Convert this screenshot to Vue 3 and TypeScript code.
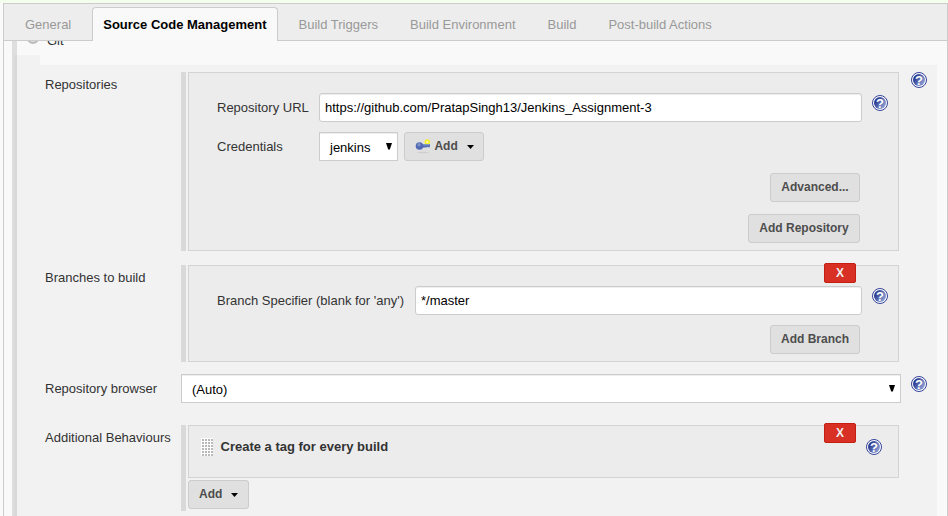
<script setup lang="ts">
import { defineComponent, h, ref } from 'vue'

const tabs: string[] = [
  'General',
  'Source Code Management',
  'Build Triggers',
  'Build Environment',
  'Build',
  'Post-build Actions',
]
const activeTab = ref('Source Code Management')
const repositoryUrl = ref('https://github.com/PratapSingh13/Jenkins_Assignment-3')
const branch = ref('*/master')

const HelpIcon = defineComponent({
  setup: () => () =>
    h('svg', { width: 16, height: 16, viewBox: '0 0 16 16' }, [
      h('defs', [
        h('linearGradient', { id: 'helpFill', x1: 0, y1: 0, x2: 1, y2: 0.6 }, [
          h('stop', { offset: '0.15', 'stop-color': '#1f2f88' }),
          h('stop', { offset: '1', 'stop-color': '#8ba0d4' }),
        ]),
      ]),
      h('circle', { cx: 8, cy: 8, r: 7.5, fill: '#fff', stroke: '#35429a', 'stroke-width': 1 }),
      h('circle', { cx: 8, cy: 8, r: 6, fill: 'url(#helpFill)' }),
      h('text', {
        x: 8, y: 12.6, 'text-anchor': 'middle', fill: '#fff',
        'font-family': 'Liberation Sans, sans-serif', 'font-weight': 700, 'font-size': 13,
      }, '?'),
    ]),
})
</script>

<template>
  <div class="page">
    <div class="config">
      <nav class="tabs">
        <a v-for="tab in tabs" :key="tab" class="tab" :class="{ active: tab === activeTab }" @click="activeTab = tab">{{ tab }}</a>
      </nav>
      <div class="scroller">
        <div class="scm">
          <div class="git-row"><span class="radio"></span><span class="git">Git</span></div>
          <div class="nested">
            <div class="cutout"></div>

            <section class="row repositories">
              <label class="name">Repositories</label>
              <div class="group">
                <div class="panel">
                  <div class="field url">
                    <label>Repository URL</label>
                    <input v-model="repositoryUrl" type="text" />
                    <HelpIcon class="help" />
                  </div>
                  <div class="field credentials">
                    <label>Credentials</label>
                    <div class="select small">
                      <span>jenkins</span>
                      <svg width="6" height="7" viewBox="0 0 6 7"><path d="M0 0H6L3.8 6.5H2.2Z" /></svg>
                    </div>
                    <button class="btn key-btn">
                      <svg class="key" width="16" height="16" viewBox="0 0 16 16">
                        <ellipse cx="8" cy="13.5" rx="6" ry="0.8" fill="#cfcfcf" />
                        <circle cx="12.3" cy="3" r="2.8" fill="#f5ef2a" />
                        <circle cx="12.3" cy="3" r="1.1" fill="#fffbd0" />
                        <path d="M7 5.3H15V7.6L14 8.7L12.7 7.7L11.5 8.5H7Z" fill="#536fb5" />
                        <path d="M7 5.8H14.5" stroke="#8c9dcc" />
                        <circle cx="4.5" cy="7" r="3.8" fill="#526ab3" />
                        <circle cx="4" cy="5.8" r="1.7" fill="#7f92cb" />
                      </svg>
                      <span>Add</span>
                      <svg class="caret" width="7" height="4" viewBox="0 0 7 4"><path d="M0 0H7L3.5 4Z" /></svg>
                    </button>
                  </div>
                  <div class="actions first"><button class="btn">Advanced...</button></div>
                  <div class="actions"><button class="btn">Add Repository</button></div>
                </div>
              </div>
              <HelpIcon class="help row-help" />
            </section>

            <section class="row branches">
              <label class="name">Branches to build</label>
              <div class="group">
                <div class="panel">
                  <button class="delete">X</button>
                  <div class="field branch">
                    <label>Branch Specifier (blank for 'any')</label>
                    <input v-model="branch" type="text" />
                    <HelpIcon class="help" />
                  </div>
                  <div class="actions branch-actions"><button class="btn">Add Branch</button></div>
                </div>
              </div>
            </section>

            <section class="row browser">
              <label class="name">Repository browser</label>
              <div class="select wide">
                <span>(Auto)</span>
                <svg width="6" height="7" viewBox="0 0 6 7"><path d="M0 0H6L3.8 6.5H2.2Z" /></svg>
              </div>
              <HelpIcon class="help row-help" />
            </section>

            <section class="row behaviours">
              <label class="name">Additional Behaviours</label>
              <div class="group">
                <div class="panel">
                  <button class="delete">X</button>
                  <div class="behaviour">
                    <span class="grip"></span>
                    <b>Create a tag for every build</b>
                    <HelpIcon class="help" />
                  </div>
                </div>
                <button class="btn add">
                  <span>Add</span>
                  <svg class="caret" width="7" height="4" viewBox="0 0 7 4"><path d="M0 0H7L3.5 4Z" /></svg>
                </button>
              </div>
            </section>
          </div>
        </div>
      </div>
    </div>
  </div>
</template>

<style>
body { margin: 0; overflow: hidden; }
</style>

<style scoped>
* { box-sizing: border-box; }
.page {
  width: 948px; height: 516px; overflow: hidden;
  padding: 3px 0 0 3px;
  background: linear-gradient(#f3ffec 3px, #fafafa 3px);
  font: 13px/15px "Liberation Sans", Arial, sans-serif;
  color: #333;
}
.config {
  height: 514px;
  border: 1px solid #ccc;
  background: #f9f9f9;
}
.tabs {
  display: flex; align-items: flex-end; gap: 10px;
  height: 37px; padding-left: 10px;
  background: #ededed; border-bottom: 1px solid #ccc;
}
.tab {
  height: 33px; padding: 8px 10px 0; margin-bottom: -1px;
  border: 1px solid transparent; border-bottom: 0;
  color: #999; white-space: nowrap;
}
.tab.active {
  height: 34px; padding: 9px 10px 0 10.5px; margin-left: -0.5px;
  border-color: #ccc; border-radius: 4px 4px 0 0;
  background: #f9f9f9; color: #000; font-weight: bold;
}
.scroller { height: 475px; overflow: hidden; padding: 0 10px 0 8px; }
.scm { border-left: 2px solid #dedede; }
.git-row {
  display: flex; align-items: flex-start; height: 14px;
  border-left: 3px solid #dedede; padding-left: 10px;
}
.radio {
  width: 12px; height: 12px; margin-top: -9px;
  border: 2px solid #bbb; border-radius: 50%; background: #ddd;
}
.git { margin: -8px 0 0 8px; }
.nested { height: 470px; border-left: 3px solid #d9d9d9; background: #f2f2f2; }
.cutout { height: 10px; margin-left: 23px; background: #f9f9f9; }
.row { display: flex; align-items: flex-start; padding-left: 28px; }
.name { flex: none; width: 136px; padding-top: 5px; white-space: nowrap; }
.group { flex: none; width: 718px; padding-left: 2px; border-left: 5px solid #d9d9d9; }
.panel { position: relative; width: 711px; border: 1px solid #d3d3d3; background: #ececec; }
.repositories { margin-top: 7px; }
.repositories .panel { height: 179px; padding-top: 20px; }
.branches { margin-top: 14px; }
.branches .panel { height: 97px; padding-top: 20px; }
.browser { margin-top: 12px; }
.browser .name { padding-top: 7px; }
.behaviours { margin-top: 22px; }
.behaviours .group { height: 86px; }
.behaviours .panel { height: 53px; padding-top: 12px; }
.field { display: flex; align-items: center; height: 29px; padding-left: 28px; }
.url label, .credentials label { width: 102px; }
.branch label { width: 198px; white-space: nowrap; }
input {
  height: 29px; padding: 0 5px; margin: 0;
  border: 1px solid #ccc; border-radius: 3px; background: #fff;
  box-shadow: inset 0 1px 1px rgba(0, 0, 0, .075);
  font: inherit; color: #000; outline: 0;
}
.url input { width: 543px; }
.branch input { width: 447px; }
.help { flex: none; display: block; }
.field .help { margin: -9px 0 0 10px; }
.row-help { margin-left: 12px; }
.browser .row-help { margin-left: 10px; margin-top: 2px; }
.credentials { margin-top: 10px; }
.select {
  display: flex; flex: none; justify-content: space-between;
  height: 29px; padding: 7px 5px 0 10px;
  border: 1px solid #ccc; background: #fff; color: #000;
  box-shadow: inset 0 1px 1px rgba(0, 0, 0, .075);
}
.select svg { margin-top: 3px; }
.small { width: 79px; }
.wide { width: 720px; }
.btn {
  display: inline-flex; align-items: center; justify-content: center;
  height: 29px; padding: 0 10.3px; margin: 0;
  border: 1px solid #ccc; border-radius: 3px; background: #e0e0e0;
  color: #4d4d4d; font: bold 12px/15px "Liberation Sans", Arial, sans-serif;
  white-space: nowrap;
}
.branch-actions .btn { padding: 0 10px; }
.key-btn { width: 80px; margin-left: 6px; padding: 0 9px 0 10px; justify-content: flex-start; }
.key { margin-right: 3.4px; }
.caret { flex: none; margin: 1px 0 0 9px; }
.actions { display: flex; justify-content: flex-end; margin: 12px 38px 0 0; }
.branch-actions { margin-top: 10px; }
.delete {
  position: absolute; top: -3px; right: 42px;
  width: 32px; height: 20px; padding: 0;
  border: 1px solid #c4200f; border-radius: 2px; background: #d93025;
  color: #eee; font: bold 12px/16px "Liberation Sans", Arial, sans-serif;
}
.behaviour { display: flex; height: 18px; padding-left: 12px; }
.behaviour b { margin: 1px 0 0 7.5px; }
.behaviour .help { margin: 1px 16px 0 auto; }
.grip {
  width: 12px; height: 18px;
  background: radial-gradient(circle at 2px 2px, #aaa 0.6px, #fff 1.2px) 0 0 / 3px 3px;
}
.add { width: 61px; margin-top: 2px; padding: 0 8px 0 10px; justify-content: flex-start; display: flex; }
</style>
